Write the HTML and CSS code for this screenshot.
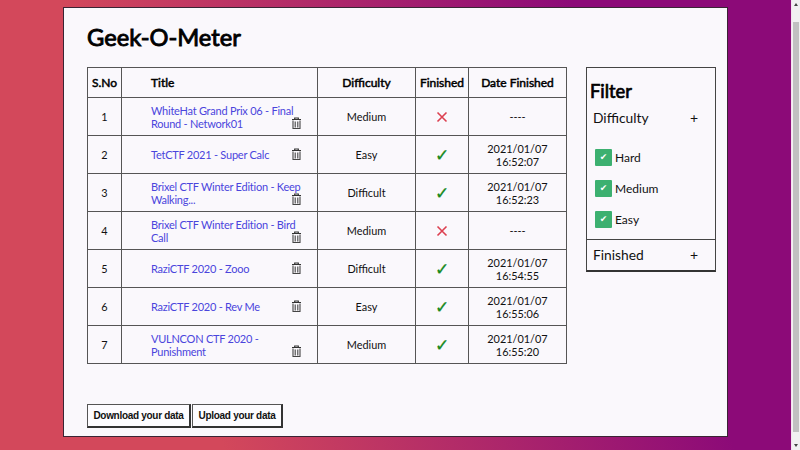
FILE: index.html
```html
<!DOCTYPE html>
<html lang="en">
<head>
<meta charset="utf-8">
<title>Geek-O-Meter</title>
<link rel="stylesheet" href="styles.css">
</head>
<body>
<svg class="defs" width="0" height="0">
  <symbol id="trash" viewBox="0 0 11 13">
    <path d="M1 2.5h9M3.7 2.4V1h3.6v1.4" fill="none" stroke="#333" stroke-width="1.2"/>
    <path d="M2 3.5V11.5h7V3.5M4.2 4.5V10.5M6.8 4.5V10.5" fill="none" stroke="#444" stroke-width="1.1"/>
  </symbol>
</svg>
<div class="page">
  <main class="card">
    <h1>Geek-O-Meter</h1>
    <div class="content">
      <table>
        <colgroup><col class="c1"><col class="c2"><col class="c3"><col class="c4"><col class="c5"></colgroup>
        <thead><tr><th>S.No</th><th class="title">Title</th><th>Difficulty</th><th>Finished</th><th>Date Finished</th></tr></thead>
        <tbody>
          <tr><td>1</td><td class="title"><div class="entry low"><a>WhiteHat Grand Prix 06 - Final<br>Round - Network01</a><svg class="trash"><use href="#trash"/></svg></div></td><td>Medium</td><td><svg class="mark no" viewBox="0 0 12 12"><path d="M1.5 1.5L10.5 10.5M10.5 1.5L1.5 10.5"/></svg></td><td>----</td></tr>
          <tr><td>2</td><td class="title"><div class="entry"><a>TetCTF 2021 - Super Calc</a><svg class="trash"><use href="#trash"/></svg></div></td><td>Easy</td><td class="yes">✓</td><td>2021/01/07<br>16:52:07</td></tr>
          <tr><td>3</td><td class="title"><div class="entry low"><a>Brixel CTF Winter Edition - Keep<br>Walking...</a><svg class="trash"><use href="#trash"/></svg></div></td><td>Difficult</td><td class="yes">✓</td><td>2021/01/07<br>16:52:23</td></tr>
          <tr><td>4</td><td class="title"><div class="entry low"><a>Brixel CTF Winter Edition - Bird<br>Call</a><svg class="trash"><use href="#trash"/></svg></div></td><td>Medium</td><td><svg class="mark no" viewBox="0 0 12 12"><path d="M1.5 1.5L10.5 10.5M10.5 1.5L1.5 10.5"/></svg></td><td>----</td></tr>
          <tr><td>5</td><td class="title"><div class="entry"><a>RaziCTF 2020 - Zooo</a><svg class="trash"><use href="#trash"/></svg></div></td><td>Difficult</td><td class="yes">✓</td><td>2021/01/07<br>16:54:55</td></tr>
          <tr><td>6</td><td class="title"><div class="entry"><a>RaziCTF 2020 - Rev Me</a><svg class="trash"><use href="#trash"/></svg></div></td><td>Easy</td><td class="yes">✓</td><td>2021/01/07<br>16:55:06</td></tr>
          <tr><td>7</td><td class="title"><div class="entry low"><a>VULNCON CTF 2020 -<br>Punishment</a><svg class="trash"><use href="#trash"/></svg></div></td><td>Medium</td><td class="yes">✓</td><td>2021/01/07<br>16:55:20</td></tr>
        </tbody>
      </table>
      <aside class="filter">
        <h2>Filter</h2>
        <div class="group"><span>Difficulty</span><span class="plus">+</span></div>
        <div class="options">
          <label><span class="box">✔</span>Hard</label>
          <label><span class="box">✔</span>Medium</label>
          <label><span class="box">✔</span>Easy</label>
        </div>
        <div class="group last"><span>Finished</span><span class="plus">+</span></div>
      </aside>
    </div>
    <div class="actions"><button class="download">Download your data</button><button class="upload">Upload your data</button></div>
  </main>
</div>
<div class="scrollbar"><i class="up"></i><i class="thumb"></i><i class="down"></i></div>
</body>
</html>
```
FILE: styles.css
```css
* { box-sizing: border-box; }
body {
  margin: 0;
  width: 800px;
  height: 450px;
  overflow: hidden;
  display: flex;
  font-family: Lato, sans-serif;
  font-size: 10.9px;
  line-height: 13px;
  color: #111;
}
.defs { position: absolute; }
.page {
  width: 791px;
  height: 450px;
  padding: 7px 0 0 63px;
  background: linear-gradient(70deg, #d3485b 23.5%, #8c0a78 77%);
}
.card {
  width: 665px;
  height: 430px;
  padding: 0 0 0 23px;
  border: 1px solid #3a2434;
  background: #faf8fc;
}
h1 {
  margin: 0;
  height: 59px;
  padding-top: 14px;
  font-size: 23.7px;
  line-height: 30px;
  font-weight: 400;
  -webkit-text-stroke: 0.9px #000;
  color: #000;
}
.content { display: flex; gap: 19px; align-items: flex-start; height: 337px; }
table { width: 480px; table-layout: fixed; border-collapse: collapse; }
.c1 { width: 34px; } .c2 { width: 196px; } .c3 { width: 98px; } .c4 { width: 53px; } .c5 { width: 98px; }
th, td { border: 1px solid #555; padding: 0; text-align: center; white-space: nowrap; }
th { height: 30px; font-size: 12px; font-weight: 400; -webkit-text-stroke: 0.5px #000; color: #000; }
td { height: 38px; }
.title { text-align: left; padding-left: 29px; }
.entry { display: flex; height: 26px; align-items: center; justify-content: space-between; padding-right: 15px; }
.entry a { color: #4a45dc; width: 138px; font-size: 11px; letter-spacing: -0.24px; }
.trash { width: 11px; height: 13px; flex: none; }
.low .trash { align-self: flex-end; }
.mark { width: 12px; height: 12px; display: block; margin: 0 auto; }
.no path { fill: none; stroke: #dc4050; stroke-width: 1.6; }
.yes { color: #168a1c; font-family: "DejaVu Sans", sans-serif; font-size: 17px; padding-top: 2px; -webkit-text-stroke: 0.3px #168a1c; }
.filter { width: 130px; height: 205px; border: 1px solid #444; border-bottom: 2px solid #333; }
h2 { margin: 0; padding: 12px 0 0 3px; font-size: 18.3px; line-height: 22px; font-weight: 400; -webkit-text-stroke: 0.7px #000; color: #000; }
.group { display: flex; justify-content: space-between; padding: 7px 17px 0 6px; font-size: 13.8px; line-height: 18px; }
.plus { font-size: 14px; }
.options { height: 112px; padding: 22px 0 0 8px; display: flex; flex-direction: column; gap: 14px; }
.options label { display: flex; gap: 3px; align-items: center; font-size: 12px; height: 17px; }
.box { width: 17px; height: 17px; background: #3cb070; color: #fff; border-radius: 1px; font: 9px/17px "DejaVu Sans", sans-serif; text-align: center; }
.last { border-top: 1px solid #444; padding-top: 6px; }
.actions { display: flex; gap: 1px; }
button { height: 24px; padding: 0; border: 1px solid #555; border-right: 2px solid #333; border-bottom: 2px solid #333; background: #fdfcff; color: #111; font: bold 10px "Liberation Sans", sans-serif; letter-spacing: -0.3px; }
.download { width: 104px; }
.upload { width: 91px; }
.scrollbar { width: 9px; background: #f1f0f1; display: flex; flex-direction: column; align-items: center; border-left: 1px solid #f6dff0; }
.up { margin-top: 3px; border: 2px solid transparent; border-top: 0; border-bottom: 3px solid #444; }
.thumb { width: 6px; height: 410px; margin-top: 16px; background: #c1c0c1; }
.down { margin-top: 12px; border: 2px solid transparent; border-bottom: 0; border-top: 3px solid #444; }
```
